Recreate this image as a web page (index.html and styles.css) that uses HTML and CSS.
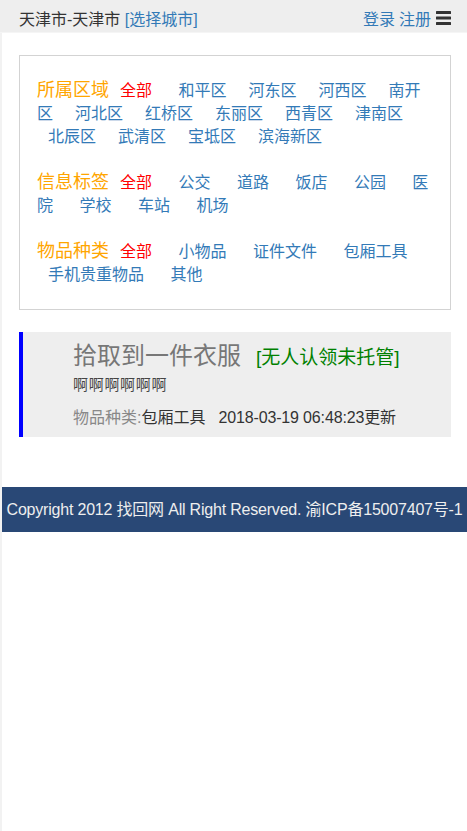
FILE: index.html
```html
<!DOCTYPE html>
<html lang="zh-CN">
<head>
<meta charset="utf-8">
<title>找回网</title>
<link rel="stylesheet" href="styles.css">
</head>
<body>
<header class="topbar">
  <div class="city">天津市-天津市 <a class="link" href="#">[选择城市]</a></div>
  <div class="user-links">
    <a class="link" href="#">登录</a>
    <a class="link" href="#">注册</a>
    <svg class="menu-icon" viewBox="0 0 15 14" width="15" height="14" aria-hidden="true">
      <rect x="0" y="0" width="15" height="3" rx="0.5"/>
      <rect x="0" y="5.5" width="15" height="3" rx="0.5"/>
      <rect x="0" y="11" width="15" height="3" rx="0.5"/>
    </svg>
  </div>
</header>
<div class="page">
  <div class="content">
    <div class="filter-box">
      <div class="filter-row"><span class="filter-label">所属区域</span><a class="opt opt-all" href="#">全部</a> <a class="opt" href="#">和平区</a><a class="opt" href="#">河东区</a><a class="opt" href="#">河西区</a><a class="opt" href="#">南开区</a><a class="opt" href="#">河北区</a><a class="opt" href="#">红桥区</a><a class="opt" href="#">东丽区</a><a class="opt" href="#">西青区</a><a class="opt" href="#">津南区</a><a class="opt" href="#">北辰区</a><a class="opt" href="#">武清区</a><a class="opt" href="#">宝坻区</a><a class="opt" href="#">滨海新区</a></div>
      <div class="filter-row"><span class="filter-label">信息标签</span><a class="opt opt-all" href="#">全部</a> <a class="opt" href="#">公交</a> <a class="opt" href="#">道路</a> <a class="opt" href="#">饭店</a> <a class="opt" href="#">公园</a> <a class="opt" href="#">医院</a> <a class="opt" href="#">学校</a> <a class="opt" href="#">车站</a> <a class="opt" href="#">机场</a></div>
      <div class="filter-row"><span class="filter-label">物品种类</span><a class="opt opt-all" href="#">全部</a> <a class="opt" href="#">小物品</a> <a class="opt" href="#">证件文件</a> <a class="opt" href="#">包厢工具</a> <a class="opt" href="#">手机贵重物品</a> <a class="opt" href="#">其他</a></div>
    </div>

    <div class="item-card">
      <div class="item-title">拾取到一件衣服<span class="item-status">[无人认领未托管]</span></div>
      <div class="item-desc">啊啊啊啊啊啊</div>
      <div class="item-meta"><span class="meta-label">物品种类:</span>包厢工具<span class="meta-date">2018-03-19 06:48:23更新</span></div>
    </div>
  </div>
  <footer class="footer">Copyright 2012 找回网 All Right Reserved. 渝ICP备15007407号-1</footer>
</div>
</body>
</html>
```
FILE: styles.css
```css
html, body {
  margin: 0;
  padding: 0;
}
body {
  background: #f2f2f2;
  font-family: "Liberation Sans", "Noto Sans CJK SC", sans-serif;
  font-size: 16px;
  color: #333;
}
a {
  text-decoration: none;
}
.link {
  color: #337ab7;
}

/* top bar */
.topbar {
  box-sizing: border-box;
  height: 33px;
  padding: 8px 16px 0 19px;
  background: #eee;
  border-bottom: 1px solid #f5f5f5;
  display: flex;
  justify-content: space-between;
  align-items: center;
  line-height: 24px;
}
.city {
  color: #333;
}
.user-links {
  display: flex;
  align-items: center;
  gap: 4px;
}
.menu-icon {
  fill: #333;
  margin-left: 1px;
  margin-bottom: 4px;
}

/* page */
.page {
  margin-left: 2px;
  background: #fff;
  min-height: calc(100vh - 33px);
  padding-top: 22px;
  box-sizing: border-box;
}
.content {
  padding: 0 16px 0 17px;
}

/* filters */
.filter-box {
  border: 1px solid #d3d3d3;
  padding: 23px 17px 23px 17px;
  display: flex;
  flex-direction: column;
  gap: 23px;
}
.filter-row {
  line-height: 23px;
  font-size: 16px;
}
.filter-label {
  font-size: 18px;
  color: #ffa500;
}
.opt {
  color: #337ab7;
  padding: 0 11px;
}
.opt-all {
  color: #f00;
}

/* item card */
.item-card {
  margin-top: 22px;
  background: #eee;
  border-left: 4px solid #00f;
  padding: 10px 10px 8px 50px;
}
.item-title {
  font-size: 24px;
  line-height: 28px;
  color: #777;
}
.item-status {
  font-size: 19px;
  color: #008000;
  margin-left: 15px;
}
.item-desc {
  margin-top: 3px;
  font-size: 15px;
  line-height: 20px;
  letter-spacing: 0.7px;
  color: #444;
}
.item-meta {
  margin-top: 12px;
  line-height: 22px;
  color: #333;
}
.meta-label {
  color: #888;
}
.meta-date {
  margin-left: 13px;
  letter-spacing: -0.15px;
}

/* footer */
.footer {
  margin-top: 50px;
  height: 45px;
  line-height: 45px;
  background: #294876;
  color: #eee;
  text-align: center;
  white-space: nowrap;
  letter-spacing: -0.2px;
}
```
